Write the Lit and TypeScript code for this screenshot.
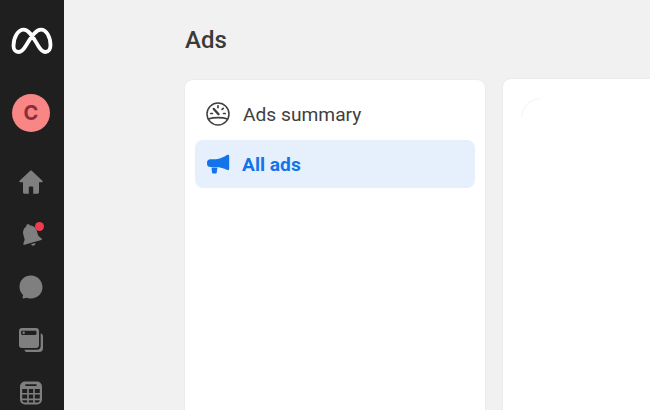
import { LitElement, html, css, svg } from "lit";
import { customElement } from "lit/decorators.js";

const navIcons = [
  svg`<path d="M12 .5c-.4 0-.7.1-1 .4L.6 10.800c-.6.600-.2 1.500.6 1.500H4v10c0 .8.600 1.400 1.400 1.400h4.400v-6.200c0-.5.400-.9.900-.9h2.600c.5 0 .9.400.9.900v6.200h4.400c.8 0 1.400-.6 1.400-1.400v-10h2.800c.8 0 1.200-.9.600-1.500L13 .9c-.3-.3-.6-.4-1-.4z"/>`,
  svg`<g transform="rotate(-16 12 13)"><path d="M12 .8c-1 0-1.800.7-1.900 1.700C7 3.400 5 6.200 5 9.500v4.500c0 1.400-1.600 3-2.500 4.300-.4.600 0 1.400.8 1.400h17.400c.8 0 1.200-.8.800-1.400-.9-1.300-2.500-2.900-2.500-4.300V9.500c0-3.300-2-6.100-5.100-7C13.800 1.500 13 .8 12 .8z"/><path d="M9.800 21h4.400c0 1.100-1 2-2.200 2s-2.200-.9-2.200-2z"/></g>`,
  svg`<path d="M12 .5C5.500.5.500 5.300.5 11.800c0 3.300 1.200 6 3.300 8 .2.200.3.400.3.700l-.6 2.100c-.2.600.3 1 .9.900l3.500-.7c.2 0 .4 0 .6.100 1.200.4 2.500.5 3.500.5 6.500 0 11.500-4.800 11.500-11.100S18.500.500 12 .500z"/>`,
  svg`<path fill-rule="evenodd" d="M3 0h14a3 3 0 0 1 3 3v14a3 3 0 0 1-3 3H3a3 3 0 0 1-3-3V3a3 3 0 0 1 3-3zm.3 2.800c-.7 0-1.200.5-1.200 1.200v1.700c0 .7.500 1.200 1.200 1.200h13c.7 0 1.200-.5 1.200-1.200V4c0-.7-.5-1.200-1.200-1.200h-13z"/><circle cx="4.700" cy="4.800" r="1.200"/><path d="M21.700 5.300c1.400.4 2.300 1.600 2.300 3V20a4 4 0 0 1-4 4H8.300c-1.400 0-2.600-.9-3-2.300H18a3.700 3.700 0 0 0 3.700-3.700V5.300z"/>`,
  svg`<path fill-rule="evenodd" d="M6 .5h12A5 5 0 0 1 23 5.500v13a5 5 0 0 1-5 5H6a5 5 0 0 1-5-5v-13a5 5 0 0 1 5-5zM7 3.200c-.5 0-.9.400-.9.900s.4.900.9.900h10c.5 0 .9-.4.900-.9s-.4-.9-.9-.9H7zM3.200 8v4h5v-4h-5zm6.600 0v4h4.400v-4H9.800zm6 0v4h5v-4h-5zM3.200 13.600v4h5v-4h-5zm6.600 0v4h4.400v-4H9.800zm6 0v4h5v-4h-5zM3.200 19.200c.1 1.300 1.300 2.400 2.800 2.400h2.200v-2.400h-5zm6.600 0v2.400h4.400v-2.400H9.800zm6 0v2.400H18c1.500 0 2.700-1.100 2.800-2.400h-5z"/>`,
];

@customElement("app-root")
export class AppRoot extends LitElement {
  static styles = css`
    :host {
      display: flex;
      width: 650px;
      height: 410px;
      overflow: hidden;
      background: #f1f1f1;
      font-family: Roboto, "Liberation Sans", sans-serif;
    }
    .rail {
      flex: none;
      width: 64px;
      background: #1f1f1f;
      display: flex;
      flex-direction: column;
      align-items: center;
      box-sizing: border-box;
      padding-top: 27px;
    }
    .meta {
      display: block;
      width: 42px;
      height: 28px;
      margin-left: -1px;
    }
    .avatar {
      width: 38px;
      height: 38px;
      border-radius: 50%;
      background: #f78684;
      color: #8e2d3a;
      font-family: Inter, Roboto, sans-serif;
      font-size: 20px;
      font-weight: 700;
      line-height: 38px;
      text-align: center;
      margin-top: 39px;
      margin-left: -2px;
    }
    .nav {
      display: flex;
      flex-direction: column;
      align-items: center;
      gap: 28.7px;
      margin-top: 38px;
      margin-left: -2px;
    }
    .nav-item {
      position: relative;
      width: 24px;
      height: 24px;
    }
    .nav-item svg {
      display: block;
      width: 24px;
      height: 24px;
      fill: #7f7f7f;
    }
    .dot {
      position: absolute;
      top: -1px;
      right: -1px;
      width: 9px;
      height: 9px;
      border-radius: 50%;
      background: #ee3b4d;
    }
    .main {
      flex: 1;
      min-width: 0;
      padding: 0 0 0 121px;
    }
    h1 {
      margin: 0;
      height: 80px;
      line-height: 80px;
      font-size: 24px;
      font-weight: 500;
      color: #3a3a3a;
    }
    .panels {
      display: flex;
      gap: 18px;
    }
    .card {
      background: #fff;
      border-radius: 8px 8px 0 0;
      box-shadow: 0 0 2px rgba(0, 0, 0, 0.08);
      height: 340px;
    }
    .menu {
      flex: none;
      width: 300px;
      box-sizing: border-box;
      padding: 10px 10px 0;
    }
    .detail {
      flex: 1;
      margin-right: -20px;
      margin-top: -1px;
      position: relative;
    }
    .spinner {
      position: absolute;
      top: 19px;
      left: 18px;
      width: 20px;
      height: 20px;
      border-top: 1px solid #f4f4f4;
      border-left: 1px solid #f4f4f4;
      border-top-left-radius: 20px;
      box-sizing: border-box;
    }
    .row {
      display: flex;
      align-items: center;
      height: 48px;
      padding-left: 11px;
      gap: 13px;
      border-radius: 8px;
      font-size: 19.2px;
      color: #3f3f3f;
    }
    .row svg {
      display: block;
      flex: none;
      width: 24px;
      height: 24px;
    }
    .row.active {
      background: #e6f0fc;
      color: #1273eb;
      font-weight: 700;
      margin-top: 2px;
      gap: 12px;
    }
  `;

  render() {
    return html`
      <aside class="rail">
        <svg class="meta" viewBox="0 0 42 28" fill="none" stroke="#fff" stroke-width="3.800" stroke-linecap="round">
          <path d="M2.500 18.800C2.500 10 7 2.600 12.800 2.600 18.500 2.600 23 12 27 18.500 29.500 22.800 32 25 34.500 25 37.800 25 39.500 22 39.500 18.300 39.500 10 35.500 2.600 30 2.600 24 2.600 19 12 15 18.500 12.500 22.800 10 25 7.500 25 4.500 25 2.500 22.500 2.500 18.800z" />
        </svg>
        <div class="avatar">C</div>
        <div class="nav">
          ${navIcons.map(
            (icon, i) => html`
              <div class="nav-item">
                <svg viewBox="0 0 24 24">${icon}</svg>
                ${i === 1 ? html`<span class="dot"></span>` : ""}
              </div>
            `
          )}
        </div>
      </aside>
      <main class="main">
        <h1>Ads</h1>
        <div class="panels">
          <section class="card menu">
            <div class="row">
              <svg viewBox="0 0 24 24" fill="none" stroke="#3f3f3f" stroke-width="1.500">
                <circle cx="12" cy="12" r="11" />
                <path d="M2.200 17c3-1 6-1.400 9.800-1.400s6.800.4 9.800 1.400" stroke-width="1.700" />
                <path d="M12.500 12.200 7.800 7" stroke-width="2.400" stroke-linecap="round" />
                <path d="M12 3.800v1.800M4.800 11.500h1.600M19.200 11.500h-1.600M17.200 6.300l-1.100 1.100" stroke-width="1.700" stroke-linecap="round" />
              </svg>
              Ads summary
            </div>
            <div class="row active">
              <svg viewBox="0 0 24 24" fill="#1273eb">
                <path d="M21.300 2.800c.9-.4 1.900.2 1.900 1.200v12.800c0 1-1 1.600-1.900 1.200-3.700-1.700-7.500-2.800-11.300-3H4.500A3.500 3.500 0 0 1 1 11.500v-.800a3.500 3.500 0 0 1 3.500-3.500H10c3.800-.3 7.600-2 11.300-4.400z" />
                <path d="M5.500 15.500h6l-.8 5c-.1.600-.6 1-1.200 1H7.300c-.7 0-1.200-.5-1.300-1.100l-.5-4.900z" />
              </svg>
              All ads
            </div>
          </section>
          <section class="card detail"><div class="spinner"></div></section>
        </div>
      </main>
    `;
  }
}
